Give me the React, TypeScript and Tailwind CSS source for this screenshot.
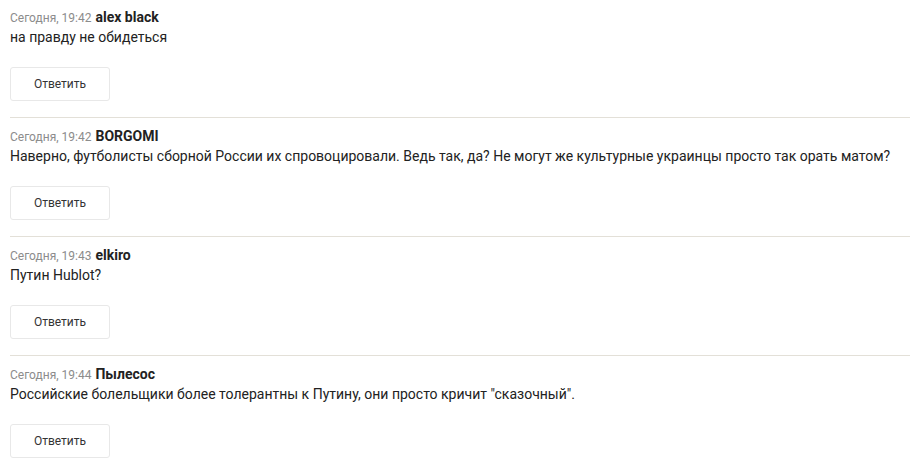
const comments = [
  { time: 'Сегодня, 19:42', author: 'alex black', text: 'на правду не обидеться' },
  {
    time: 'Сегодня, 19:42',
    author: 'BORGOMI',
    text: 'Наверно, футболисты сборной России их спровоцировали. Ведь так, да? Не могут же культурные украинцы просто так орать матом?',
  },
  { time: 'Сегодня, 19:43', author: 'elkiro', text: 'Путин Hublot?' },
  {
    time: 'Сегодня, 19:44',
    author: 'Пылесос',
    text: 'Российские болельщики более толерантны к Путину, они просто кричит "сказочный".',
  },
]

function Comment({ time, author, text, last }: { time: string; author: string; text: string; last: boolean }) {
  return (
    <li className={`pt-[9px] first:pt-2 pb-[16px] ${last ? '' : 'border-b border-[#e3e0d8]'}`}>
      <div className="h-[19px] leading-[18px]">
        <span className="text-[12px] text-[#8c8c8c]">{time}</span>{' '}
        <span className="text-[14px] font-bold text-[#222]">{author}</span>
      </div>
      <p className="h-[20px] text-[14px] leading-[20px] text-[#222]">{text}</p>
      <button className="mt-[20px] h-[34px] w-[100px] rounded-[3px] border border-[#e8e8e8] bg-white text-[12px] text-[#333]">
        Ответить
      </button>
    </li>
  )
}

export default function App() {
  return (
    <div className="min-h-screen bg-white px-[10px] font-['Roboto',sans-serif]">
      <ul className="w-[900px]">
        {comments.map((c, i) => (
          <Comment key={i} {...c} last={i === comments.length - 1} />
        ))}
      </ul>
    </div>
  )
}
